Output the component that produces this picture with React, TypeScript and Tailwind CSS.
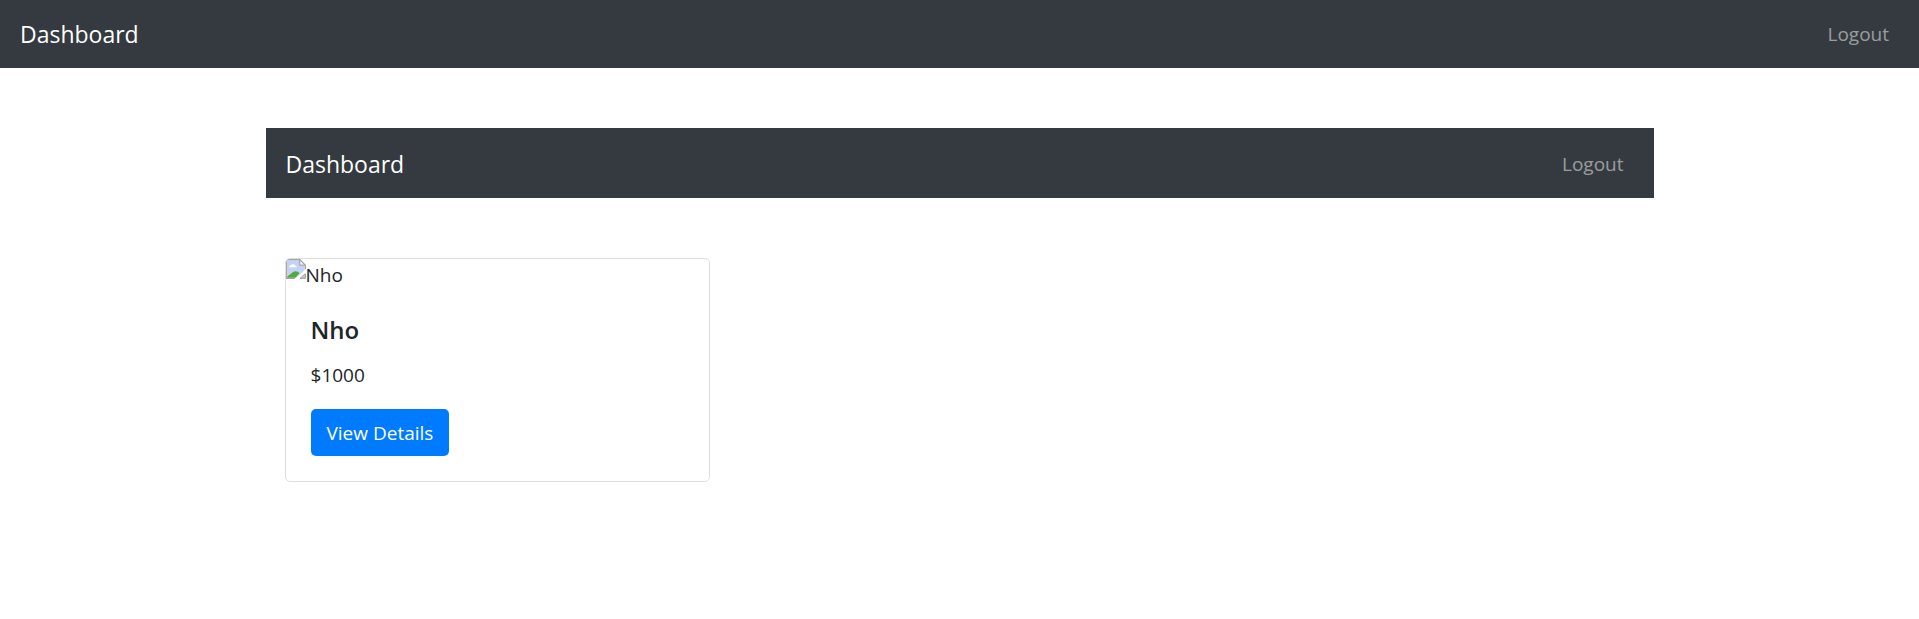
type NavbarProps = { label: string; className: string };

function Navbar({ label, className }: NavbarProps) {
  return (
    <nav
      aria-label={label}
      className={`flex items-center justify-between bg-[#343a40] px-5 ${className}`}
    >
      <a href="#dashboard" className="text-[23px] leading-9 text-white">
        Dashboard
      </a>
      <a href="#logout" className="px-[10px] text-[19px] leading-[30px] text-white/50">
        Logout
      </a>
    </nav>
  );
}

function MissingImage() {
  return (
    <svg viewBox="0 0 16 16" className="size-5 shrink-0" aria-hidden="true">
      <path d="M.5.5h10.6l4.400 4.400v4.300L9 15.500H.5z" fill="#fff" />
      <path d="M1 1h10v4h4v4l-6.500 6H1z" fill="#c3d3f7" />
      <path d="M2.500 6.500c0-1.100.8-1.600 1.700-1.500C4.600 3.800 6.600 3.800 7 5.200c1 0 1.500.5 1.500 1.300z" fill="#fff" />
      <path d="M1 15v-1.200C3.500 13 5 9.800 7.500 9.800c1.500 0 2.600.7 3.300 1.600L7.500 15H1z" fill="#53ab38" />
      <path d="M11 .5v4.400h4.500z" fill="#f4f4f4" stroke="#9a9a9a" strokeWidth=".8" />
      <path d="M7 15.500H.5V.5H11l4.500 4.400v3.300" fill="none" stroke="#a3a3a3" strokeWidth=".9" />
      <path d="M16 8.200 7 16h3.600l5.400-4.800z" fill="#fff" />
      <path d="M15.500 11.800v3.700h-4.300z" fill="#b9c3d6" stroke="#a3a3a3" strokeWidth=".8" />
    </svg>
  );
}

function ProductCard({ name, price }: { name: string; price: number }) {
  return (
    <article className="overflow-hidden rounded-[5px] border border-[#dfdfdf] bg-white">
      <div className="flex h-[30px] items-start leading-8">
        <MissingImage />
        <span>{name}</span>
      </div>
      <div className="p-[25px]">
        <h5 className="mb-[13px] text-2xl leading-8 font-semibold">{name}</h5>
        <p className="mb-[18px] leading-8">${price}</p>
        <a
          href="#details"
          className="inline-flex h-[47px] items-center rounded-[5px] bg-[#007bff] px-4 pt-0.5 align-top text-white"
        >
          View Details
        </a>
      </div>
    </article>
  );
}

export default function App() {
  return (
    <div className="bg-white font-['Open_Sans','Noto_Sans',sans-serif] text-[19px] text-[#212529]">
      <Navbar label="Main" className="h-[68px]" />
      <main className="mx-auto mt-[60px] max-w-[1388px]">
        <Navbar label="Products" className="h-[70px] pt-0.5" />
        <div className="mt-[60px] grid grid-cols-1 gap-[37px] px-[19px] md:grid-cols-3">
          <ProductCard name="Nho" price={1000} />
        </div>
      </main>
    </div>
  );
}
